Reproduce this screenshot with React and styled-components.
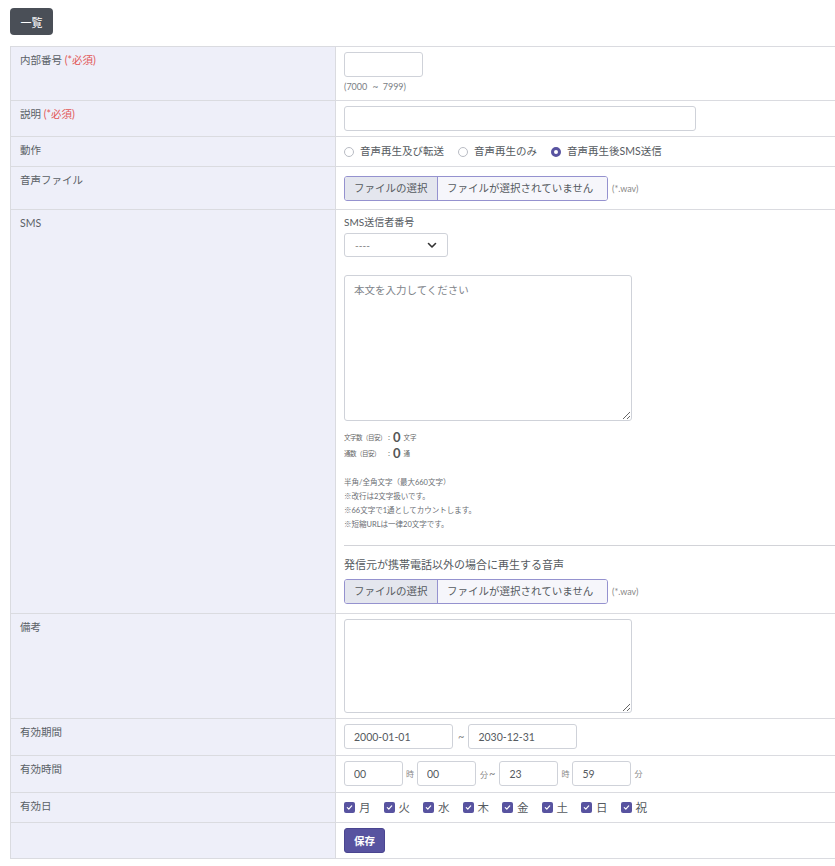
import styled, { createGlobalStyle } from 'styled-components';

const BORDER = `#dadbe0`;
const LABEL_BG = `#eeeff9`;
const TEXT = `#555a60`;
const PURPLE = `#5853a0`;
const FILE_BORDER = `#9592cf`;

const GlobalStyle = createGlobalStyle`
  html, body {
    margin: 0;
    padding: 0;
    background: #fff;
    overflow: hidden;
  }
  body {
    font-family: 'Lato', 'Noto Sans CJK JP', sans-serif;
    color: ${TEXT};
  }
  * {
    box-sizing: border-box;
  }
`;

const DAYS = ['月', '火', '水', '木', '金', '土', '日', '祝'];
const ACTIONS = [
  { label: '音声再生及び転送', checked: false },
  { label: '音声再生のみ', checked: false },
  { label: '音声再生後SMS送信', checked: true },
];

function FileInput() {
  return (
    <FileLine>
      <FileBox>
        <FileButton>ファイルの選択</FileButton>
        <FileName>ファイルが選択されていません</FileName>
      </FileBox>
      <Ext>(*.wav)</Ext>
    </FileLine>
  );
}

function Check() {
  return (
    <CheckBox>
      <svg width="7" height="7" viewBox="0 0 8 8">
        <path d="M1.5 4.2 L3.2 5.8 L6.5 2.2" fill="none" stroke="#fff" strokeWidth="1.4" strokeLinecap="round" strokeLinejoin="round" />
      </svg>
    </CheckBox>
  );
}

export default function App() {
  return (
    <Page>
      <GlobalStyle />
      <ListButton>一覧</ListButton>
      <Table>
        <Row>
          <Label>内部番号 <Req>(*必須)</Req></Label>
          <Cell $pb={8}>
            <TextInput $w={79} />
            <Hint>(7000 <Tilde $size={10}>~</Tilde> 7999)</Hint>
          </Cell>
        </Row>
        <Row>
          <Label>説明 <Req>(*必須)</Req></Label>
          <Cell>
            <TextInput $w={352} />
          </Cell>
        </Row>
        <Row>
          <Label>動作</Label>
          <Cell>
            <InlineLine>
              {ACTIONS.map((a) => (
                <RadioItem key={a.label}>
                  <Radio $checked={a.checked} />
                  {a.label}
                </RadioItem>
              ))}
            </InlineLine>
          </Cell>
        </Row>
        <Row>
          <Label>音声ファイル</Label>
          <Cell $pt={9} $pb={8}>
            <FileInput />
          </Cell>
        </Row>
        <Row>
          <Label>SMS</Label>
          <Cell $pb={9}>
            <SubTitle>SMS送信者番号</SubTitle>
            <SelectBox>
              <span>----</span>
              <svg width="10" height="7" viewBox="0 0 10 7">
                <path d="M1.5 1.5 L5 5 L8.5 1.5" fill="none" stroke="#333" strokeWidth="1.6" strokeLinecap="round" strokeLinejoin="round" />
              </svg>
            </SelectBox>
            <TextArea $h={146} $mt={18} placeholder="本文を入力してください" />
            <Counts>
              <CountLine>
                <CountLabel>文字数（目安）</CountLabel>
                <Colon>:</Colon>
                <Num>0</Num>文字
              </CountLine>
              <CountLine>
                <CountLabel>通数（目安）</CountLabel>
                <Colon>:</Colon>
                <Num>0</Num>通
              </CountLine>
            </Counts>
            <Notes>
              <div>半角/全角文字（最大660文字）</div>
              <div>※改行は2文字扱いです。</div>
              <div>※66文字で1通としてカウントします。</div>
              <div>※短縮URLは一律20文字です。</div>
            </Notes>
            <Rule />
            <SubTitle $size={11} $mt={12}>発信元が携帯電話以外の場合に再生する音声</SubTitle>
            <Spacer $h={7} />
            <FileInput />
          </Cell>
        </Row>
        <Row>
          <Label>備考</Label>
          <Cell>
            <TextArea $h={94} />
          </Cell>
        </Row>
        <Row>
          <Label>有効期間</Label>
          <Cell $pb={6}>
            <InlineLine>
              <TextInput $w={109} defaultValue="2000-01-01" />
              <Unit $pad={4}><Tilde>~</Tilde></Unit>
              <TextInput $w={109} defaultValue="2030-12-31" />
            </InlineLine>
          </Cell>
        </Row>
        <Row>
          <Label>有効時間</Label>
          <Cell $pb={6}>
            <InlineLine>
              <TextInput $w={59} defaultValue="00" />
              <Unit>時</Unit>
              <TextInput $w={59} defaultValue="00" />
              <Unit $pad={4}>分<Tilde>~</Tilde></Unit>
              <TextInput $w={59} defaultValue="23" />
              <Unit>時</Unit>
              <TextInput $w={59} defaultValue="59" />
              <Unit>分</Unit>
            </InlineLine>
          </Cell>
        </Row>
        <Row>
          <Label>有効日</Label>
          <Cell>
            <InlineLine>
              {DAYS.map((d) => (
                <DayItem key={d}>
                  <Check />
                  {d}
                </DayItem>
              ))}
            </InlineLine>
          </Cell>
        </Row>
        <Row>
          <Label />
          <Cell $pb={5}>
            <SaveButton>保存</SaveButton>
          </Cell>
        </Row>
      </Table>
    </Page>
  );
}

const Page = styled.div`
  padding: 8px 0 0 10px;
  width: 835px;
  height: 866px;
  overflow: hidden;
`;

const ListButton = styled.button`
  display: block;
  width: 43px;
  height: 27px;
  padding: 0;
  border: none;
  border-radius: 4px;
  background: #4a4f57;
  color: #fff;
  font-family: inherit;
  font-size: 11px;
  margin-bottom: 11px;
`;

const Table = styled.div`
  width: 880px;
  border: 1px solid ${BORDER};
`;

const Row = styled.div`
  display: grid;
  grid-template-columns: 325px 1fr;
  & + & {
    border-top: 1px solid ${BORDER};
  }
`;

const Label = styled.div`
  background: ${LABEL_BG};
  border-right: 1px solid ${BORDER};
  padding: 7px 9px;
  font-size: 10.5px;
  line-height: 13px;
  color: #5a5f66;
`;

const Req = styled.span`
  color: #e25858;
`;

const Cell = styled.div`
  padding: ${(p) => p.$pt ?? 5}px 8px ${(p) => p.$pb ?? 5}px 8px;
  min-width: 0;
`;

const TextInput = styled.input`
  display: block;
  width: ${(p) => p.$w}px;
  height: 25px;
  border: 1px solid #cfd2d9;
  border-radius: 3px;
  padding: 0 9px;
  font-family: inherit;
  font-size: 10.5px;
  color: ${TEXT};
  background: #fff;
  outline: none;
`;

const Hint = styled.div`
  display: flex;
  align-items: center;
  gap: 2px;
  height: 12px;
  margin-top: 3px;
  font-size: 9px;
  color: #7a7e84;
  white-space: pre;
`;

const InlineLine = styled.div`
  display: flex;
  align-items: center;
  min-height: 19px;
`;

const RadioItem = styled.label`
  display: flex;
  align-items: center;
  gap: 6px;
  margin-right: 14px;
  font-size: 10.5px;
  line-height: 19px;
  color: ${TEXT};
`;

const Radio = styled.span`
  width: 10px;
  height: 10px;
  border-radius: 50%;
  background: #fff;
  border: ${(p) => (p.$checked ? `3px solid ${PURPLE}` : '1px solid #b9bcc4')};
`;

const FileLine = styled.div`
  display: flex;
  align-items: center;
`;

const FileBox = styled.div`
  display: flex;
  width: 264px;
  height: 25px;
  border: 1px solid ${FILE_BORDER};
  border-radius: 3px;
  overflow: hidden;
  font-size: 10.5px;
  line-height: 23px;
`;

const FileButton = styled.span`
  width: 93px;
  padding-left: 9px;
  background: #e4e6ee;
  border-right: 1px solid ${FILE_BORDER};
  white-space: nowrap;
`;

const FileName = styled.span`
  flex: 1;
  padding-left: 9px;
  background: #f6f6fb;
  white-space: nowrap;
`;

const Ext = styled.span`
  margin-left: 4px;
  font-size: 9px;
  color: #888;
`;

const SubTitle = styled.div`
  font-size: ${(p) => p.$size ?? 10}px;
  line-height: 14px;
  margin-top: ${(p) => p.$mt ?? 0}px;
`;

const SelectBox = styled.div`
  display: flex;
  align-items: center;
  justify-content: space-between;
  margin-top: 4px;
  width: 104px;
  height: 24px;
  padding: 0 10px;
  border: 1px solid #cfd2d9;
  border-radius: 3px;
  font-size: 10px;
  color: #777;
`;

const TextArea = styled.textarea`
  display: block;
  width: 288px;
  height: ${(p) => p.$h}px;
  margin-top: ${(p) => p.$mt ?? 0}px;
  padding: 6px 9px;
  border: 1px solid #cfd2d9;
  border-radius: 3px;
  font-family: inherit;
  font-size: 10.5px;
  color: ${TEXT};
  outline: none;
  &::placeholder {
    color: #80848a;
  }
`;

const Counts = styled.div`
  margin-top: 8px;
`;

const CountLine = styled.div`
  display: flex;
  align-items: center;
  height: 16px;
  font-size: 6.5px;
  color: #666;
`;

const CountLabel = styled.span`
  width: 44px;
  letter-spacing: -0.5px;
  white-space: nowrap;
  overflow: hidden;
`;

const Colon = styled.span`
  font-size: 8px;
`;

const Num = styled.b`
  font-family: 'Lato', sans-serif;
  font-size: 13px;
  font-weight: 700;
  color: #555;
  margin: 0 3px;
`;

const Notes = styled.div`
  margin-top: 15px;
  font-size: 7.5px;
  line-height: 14px;
  color: #6a6e74;
`;

const Rule = styled.div`
  margin-top: 13px;
  height: 1px;
  background: #d2d3d8;
`;

const Spacer = styled.div`
  height: ${(p) => p.$h}px;
`;

const Unit = styled.span`
  padding: 0 ${(p) => p.$pad ?? 3}px;
  font-size: 8px;
  color: #888;
  white-space: nowrap;
`;

const Tilde = styled.span`
  font-size: ${(p) => p.$size ?? 11}px;
  margin-left: 1px;
`;

const DayItem = styled.label`
  display: flex;
  align-items: center;
  gap: 4px;
  margin-right: 13px;
  font-size: 11.5px;
  line-height: 19px;
  color: ${TEXT};
`;

const CheckBox = styled.span`
  display: flex;
  align-items: center;
  justify-content: center;
  width: 11px;
  height: 11px;
  border-radius: 2px;
  background: ${PURPLE};
`;

const SaveButton = styled.button`
  display: block;
  width: 41px;
  height: 25px;
  padding: 0;
  border: 1px solid #4a4590;
  border-radius: 3px;
  background: ${PURPLE};
  color: #fff;
  font-family: inherit;
  font-size: 10.5px;
  font-weight: 700;
`;
